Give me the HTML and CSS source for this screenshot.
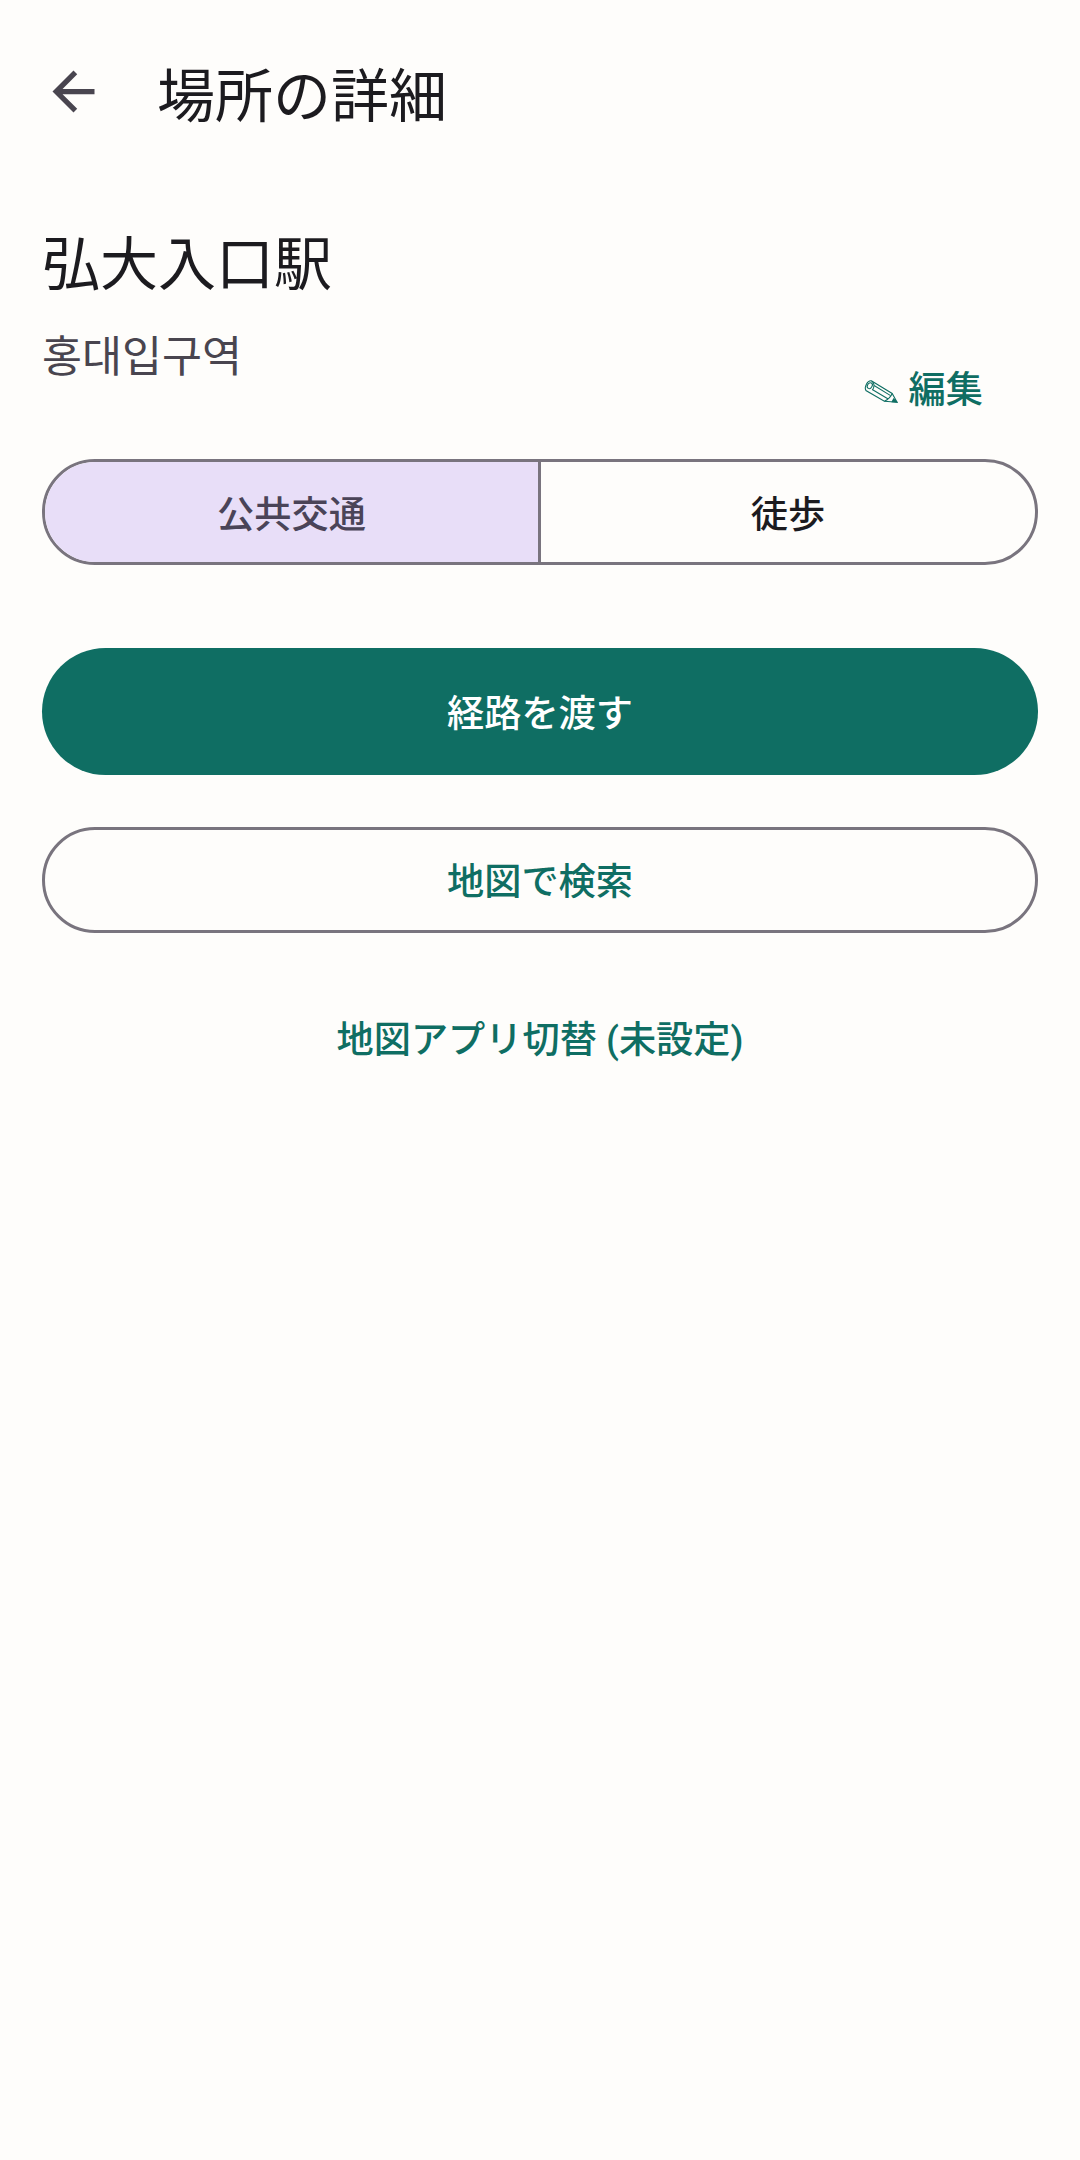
FILE: index.html
```html
<!DOCTYPE html>
<html lang="ja">
<head>
  <meta charset="UTF-8" />
  <meta name="viewport" content="width=device-width, initial-scale=1.0"/>
  <title>場所の詳細</title>
  <link rel="stylesheet" href="styles.css">
</head>
<body>
  <header class="top-bar">
    <button class="back-btn" aria-label="戻る">
      <svg viewBox="0 0 24 24" width="63" height="63"><path d="M20 11H7.83l5.59-5.59L12 4l-8 8 8 8 1.41-1.41L7.83 13H20z"/></svg>
    </button>
    <h1 class="top-title">場所の詳細</h1>
  </header>

  <main class="content">
    <section class="place">
      <div class="place-names">
        <h2 class="place-name">弘大入口駅</h2>
        <p class="place-local" lang="ko">홍대입구역</p>
      </div>
      <button class="edit-btn">
        <svg class="edit-icon" viewBox="0 0 36 27" width="35" height="27">
          <path d="M8.5 2.5 30 15.5 35 24.5 22 23.5 3 12.5C1 9 4.5 2 8.5 2.5Z"/>
          <ellipse cx="7" cy="7.5" rx="2.4" ry="3.2" transform="rotate(30 7 7.5)"/>
          <path d="M9 3C12 4.5 12 9 9.500 12M11 7 28 17.500M9.500 11.500 25.500 21M30 15.500C29 18 27 21 22 23.500"/>
          <path class="edit-tip" d="M31.500 21 35 24.500 30 24Z"/>
        </svg>
        <span>編集</span>
      </button>
    </section>

    <div class="mode-toggle">
      <button class="mode mode-selected">公共交通</button>
      <button class="mode">徒歩</button>
    </div>

    <button class="btn btn-primary">経路を渡す</button>
    <button class="btn btn-outline">地図で検索</button>
    <button class="btn-text">地図アプリ切替 (未設定)</button>
  </main>
</body>
</html>
```

FILE: styles.css
```css
* {
  box-sizing: border-box;
}

body {
  margin: 0;
  min-height: 2160px;
  background: #fefdfb;
  color: #1c1b1f;
  font-family: Roboto, "Noto Sans CJK JP", sans-serif;
}

button {
  font-family: inherit;
  background: none;
  border: none;
  padding: 0;
}

.top-bar {
  display: flex;
  align-items: center;
  height: 190px;
  padding-left: 42px;
}

.back-btn {
  display: flex;
  width: 63px;
  height: 63px;
  margin: 0 52px 8px 0;
}

.back-btn svg {
  fill: #49454f;
}

.top-title {
  margin: 4px 0 0;
  font-size: 58px;
  font-weight: 400;
  line-height: 1;
}

.content {
  display: flex;
  flex-direction: column;
  padding: 0 42px;
}

.place {
  display: flex;
  justify-content: space-between;
  align-items: flex-end;
  height: 269px;
}

.place-names {
  align-self: flex-start;
}

.place-name {
  margin: 35px 0 0;
  font-size: 58px;
  font-weight: 400;
  line-height: 80px;
}

.place-local {
  margin: 21px 0 0;
  font-family: "Noto Sans CJK KR", sans-serif;
  font-size: 43.5px;
  line-height: 56px;
  color: #49454f;
}

.edit-btn {
  display: flex;
  align-items: center;
  gap: 11px;
  margin: 0 55px 44px 0;
  font-size: 37.2px;
  font-weight: 500;
  line-height: 50px;
  color: #0f6e63;
}

.edit-icon {
  margin-top: 2px;
  fill: none;
  stroke: #0f6e63;
  stroke-width: 1.1;
}

.edit-tip {
  fill: #0f6e63;
}

.mode-toggle {
  display: flex;
  height: 106px;
  border: 3px solid #79747e;
  border-radius: 53px;
  overflow: hidden;
}

.mode {
  flex: 1;
  font-size: 37.2px;
  font-weight: 500;
  color: #1c1b1f;
}

.mode-selected {
  flex: 0 0 496px;
  background: #e8def8;
  color: #4a4458;
  border-right: 3px solid #79747e;
}

.btn {
  width: 100%;
  padding-bottom: 2px;
  font-size: 37.2px;
  font-weight: 500;
  border-radius: 64px;
}

.btn-primary {
  height: 127px;
  margin-top: 83px;
  background: #0f6e63;
  color: #fff;
}

.btn-outline {
  height: 106px;
  margin-top: 52px;
  border: 3px solid #79747e;
  color: #0f6e63;
}

.btn-text {
  height: 106px;
  margin-top: 51px;
  font-size: 37.2px;
  font-weight: 500;
  color: #0f6e63;
}
```
